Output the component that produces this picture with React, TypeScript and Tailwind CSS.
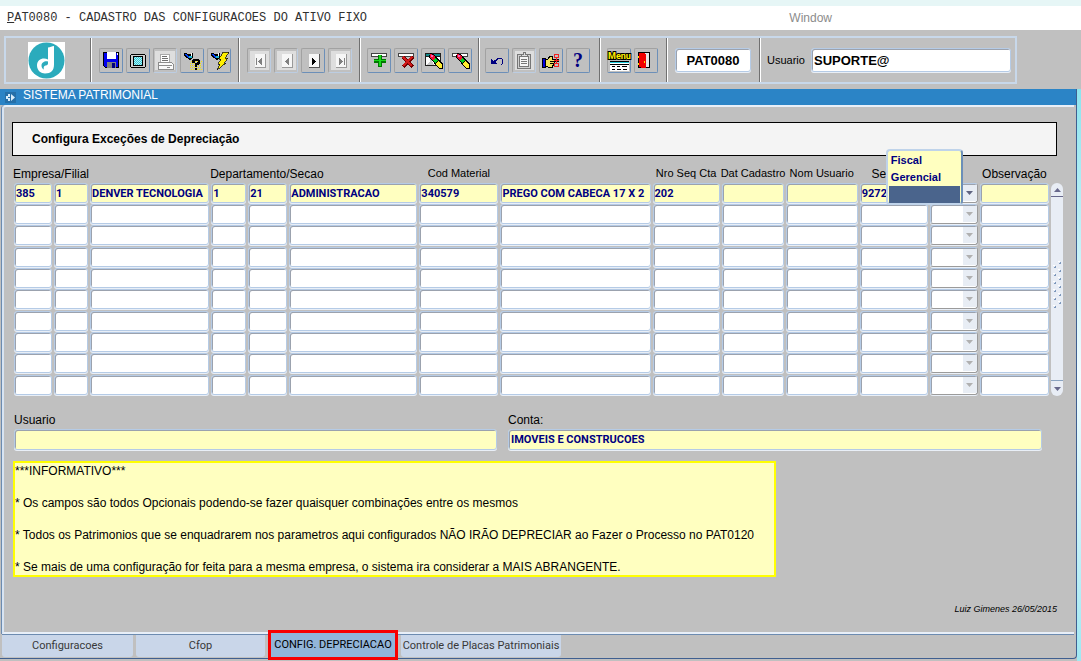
import { useState, type ReactNode } from 'react';

const fieldBase =
  'block w-full rounded-[3px] border border-[#b5cbe6] shadow-[inset_1px_1px_0_#9ba2ae,0_1px_0_#e9eff7] outline-none';

function Save() {
  return (
    <>
      <path d="M3 3h16v16H5l-2-2z" fill="#000" />
      <path d="M4 4h14v14H5l-1-1z" fill="#0000f0" />
      <path d="M7 3h9v7H7z" fill="#fff" />
      <path d="M17 4h1v2h-1z" fill="#fff" />
      <path d="M7 13h9v6H7z" fill="#808080" />
      <path d="M12 14h3v5h-3z" fill="#000080" />
    </>
  );
}

function Screen() {
  return (
    <>
      <path d="M4 5h14v1h1v12h-1v1H4v-1H3V6h1z" fill="#000" />
      <path d="M4 6h14v12H4z" fill="#d0d0d0" />
      <path d="M6 7h10v10H6z" fill="#000" />
      <path d="M7 8h8v8H7z" fill="#b4f0f4" />
      <path d="M7 8.500h8M7 10.500h8M7 12.500h8M7 14.500h8" stroke="#30c8d8" strokeDasharray="1 1" />
      <path d="M8 9.500h7M8 11.500h7M8 13.500h7M8 15.500h7" stroke="#30c8d8" strokeDasharray="1 1" />
    </>
  );
}

function Printer() {
  return (
    <>
      <path d="M1 2h20v19H1z" fill="#dedede" />
      <path d="M6 5h9l1 8H6z" fill="#fff" stroke="#aaa" />
      <path d="M8 7.500h5M8 9.500h6M8 11.500h6" stroke="#707070" />
      <path d="M4 13h13l2 2v5H4z" fill="#fafafa" stroke="#8c8c8c" />
      <path d="M4 16.500h14M13 18.500h3" stroke="#8c8c8c" />
    </>
  );
}

function Torch() {
  return (
    <>
      <path d="M3 4h2l1 1h4l2-2v5l-2 3H8L7 9H5L3 6z" fill="#000" />
      <path d="M4 5h1l2 2h2v2H7L4 6z" fill="#0040ff" />
      <path d="M8 7h3v2H8z" fill="#20b8d0" />
      <path d="M10 4h1v3h-1z" fill="#fff" />
    </>
  );
}

function TorchHelp() {
  return (
    <>
      <Torch />
      <path d="M10 12.500h11M9 14.500h12M9 16.500h12M9 18.500h12M10 20.500h11" stroke="#f8e800" strokeDasharray="1 1" />
      <path d="M12 10h6v1h1v4h-1v1h-2v2h-2v-4h2v-1h1v-1h-3v2h-3v-3h1zM14 19h2v2h-2z" fill="#000" />
    </>
  );
}

function TorchBolt() {
  return (
    <>
      <Torch />
      <path d="M15 3h6l-4 6h3l-4 5h2L9 21l3-6h-2l3-5h-2z" fill="#ffef00" stroke="#000" strokeWidth="0.7" />
      <path d="m17 4 2 0-4 6" stroke="#ffef00" fill="none" />
    </>
  );
}

function Nav({ dir, end, off }: { dir: 'l' | 'r'; end?: boolean; off?: boolean }) {
  const c = off ? '#808080' : '#000';
  return (
    <>
      {off && <path d="M2 2h19v19H2z" fill="#dedede" />}
      <path d="M7 5h11v14H7z" fill={off ? '#999' : '#555'} />
      <path d="M7 5h10v13H7z" fill="#f6f6f6" />
      {dir === 'l' ? <path d="M14 9v7l-4-3v-1z" fill={c} /> : <path d="M10 9v7l4-3v-1z" fill={c} />}
      {end && <path d={dir === 'l' ? 'M8 9h1v7H8z' : 'M15 9h1v7h-1z'} fill={c} />}
    </>
  );
}

function Bar() {
  return <path d="M3.500 4.500h15v3h-15z" fill="#fff" stroke="#444" />;
}

function Plus() {
  return (
    <>
      <Bar />
      <path d="M10 6h4v4h4v4h-4v4h-4v-4H6v-4h4z" fill="#007800" />
      <path d="M11 6h2v5h5v1h-5v5h-2v-5H6v-1h5z" fill="#18d818" />
    </>
  );
}

function Cross() {
  return (
    <>
      <Bar />
      <path d="m8 8 10 10M18 8 8 18" stroke="#700000" strokeWidth="4" />
      <path d="m8 8 9 9M17 8 8 17" stroke="#d01818" strokeWidth="2" />
    </>
  );
}

function Pencil() {
  return (
    <>
      <path d="m8 4 4 1 9 10v5h-4L7 8z" fill="#000" />
      <path d="m8 5 4 1 2 4-3 2-3-4z" fill="#f01030" />
      <path d="M9 6h2v2H9z" fill="#ff60c0" />
      <path d="m13 9 3 2-3 3-2-3z" fill="#00d020" />
      <path d="m16 12 4 4v3h-3l-4-4z" fill="#ffef30" />
    </>
  );
}

function ClearForm() {
  return (
    <>
      <path d="M3 4h16v13H3z" fill="#202020" />
      <path d="M4 5h14v2H4z" fill="#108888" />
      <path d="M4 8h14v8H4z" fill="#fff" />
      <path d="m8 8 4 8H4l4-4z" fill="#c8c8c8" />
      <Pencil />
    </>
  );
}

function ClearRow() {
  return (
    <>
      <Bar />
      <Pencil />
    </>
  );
}

function Undo() {
  return (
    <>
      <path d="M5 9v6h6l-2-2 3-2-1-1-4 2z" fill="#000080" />
      <path d="M10 11c2-2 6-3 7 1 0 2-1 3-2 4" fill="none" stroke="#000080" strokeWidth="1" />
    </>
  );
}

function Clipboard() {
  return (
    <>
      <path d="M2 2h19v19H2z" fill="#dedede" />
      <path d="M4.500 5.500h13v14h-13z" fill="#d0d0d0" stroke="#777" />
      <path d="M6.500 7.500h9v10h-9z" fill="#f5f5f5" stroke="#777" />
      <path d="M8.500 7.500v-2h2v-2h2v2h2v2z" fill="#ddd" stroke="#777" />
      <path d="M8 10.500h6M8 12.500h6M8 14.500h6" stroke="#777" />
    </>
  );
}

function Hand() {
  return (
    <>
      <path d="M2 9h3v9H2z" fill="#0000e0" stroke="#000" />
      <path d="M5 10h3l2-3h2v3h6v2h-4v2h-1v2h-1v2H8l-3-1z" fill="#f0e060" stroke="#000" />
      <path d="M10 12.500h4M10 14.500h3" stroke="#000" />
      <circle cx="16.500" cy="7" r="2" fill="none" stroke="#f02020" />
      <circle cx="16.500" cy="16" r="2" fill="none" stroke="#f02020" />
      <path d="m16 9 1 2-1 3M14 11h5" fill="none" stroke="#f02020" />
    </>
  );
}

function Help() {
  return (
    <text x="11" y="18" textAnchor="middle" fill="#000080" className="font-['Liberation_Serif',serif] text-[20px] font-bold">
      ?
    </text>
  );
}

function Menu() {
  return (
    <>
      <path d="M2 12h19v10H2z" fill="#fff" />
      <path d="M2 13h19v1H2z" fill="#20c8d8" />
      <path d="M2 12.500h19M2 15.500h19" stroke="#000" />
      <path d="M4 17.500h3M9 17.500h3M14 17.500h5M4 20.500h3M9 20.500h4M15 20.500h4" stroke="#000" />
      <text
        x="11.500"
        y="10"
        textAnchor="middle"
        fill="#ffef00"
        stroke="#000"
        strokeWidth="2"
        paintOrder="stroke"
        className="font-['Roboto',sans-serif] text-[9px] font-bold"
      >
        Menu
      </text>
    </>
  );
}

function Door() {
  return (
    <>
      <path d="M3.500 3.500h11v15h-11z" fill="#e8e8e8" stroke="#000" />
      <path d="M4 4h5l2 2v13H8l-4-1z" fill="#f00000" />
      <path d="M9 12h1v2H9zM3 7h1v2H3zM3 14h1v2H3z" fill="#ffe000" />
    </>
  );
}

function Tool({ label, off, children }: { label: string; off?: boolean; children: ReactNode }) {
  return (
    <button
      type="button"
      aria-label={label}
      disabled={off}
      className={`h-[25px] w-6 shrink-0 rounded-[2px] border border-t-[#a2a2a2] border-l-[#a2a2a2] ${
        off ? 'border-r-[#bccde2] border-b-[#bccde2]' : 'border-r-[#6c8fb8] border-b-[#6c8fb8]'
      }`}
    >
      <svg viewBox="0 0 22 23" className="block h-[23px] w-[22px] overflow-visible" shapeRendering="crispEdges">
        {children}
      </svg>
    </button>
  );
}

function Group({ children, className }: { children: ReactNode; className: string }) {
  return (
    <div className={`flex shrink-0 items-center gap-[3px] border-r border-r-[#707070] border-l border-l-white ${className}`}>
      {children}
    </div>
  );
}

function Logo() {
  return (
    <svg viewBox="0 0 37 37" className="size-[37px] bg-white" role="img" aria-label="Logo">
      <circle cx="18.500" cy="18.500" r="18" fill="#2babbc" />
      <path
        d="M20 17.500c-5-2.500-11 0-11 6 0 5 4 8 8 8 6 0 9-3 9-9V4c-2 0-4 1.500-6 1.500z"
        fill="#fff"
      />
      <path d="M20 19.500c-3-1-6.500 1-6.500 4 0 2 1 3.500 2.500 4-.5-1-.5-2.500.5-3.500 1-.8 3.500-.5 3.500-2.500z" fill="#2babbc" />
    </svg>
  );
}

const columns = [
  { w: 'w-[40px]', name: 'Empresa', value: '385' },
  { w: 'w-[36px]', name: 'Filial', value: '1' },
  { w: 'w-[121px]', name: 'Nome da empresa', value: 'DENVER TECNOLOGIA' },
  { w: 'w-[37px]', name: 'Departamento', value: '1' },
  { w: 'w-[41px]', name: 'Secao', value: '21' },
  { w: 'w-[130px]', name: 'Nome da secao', value: 'ADMINISTRACAO' },
  { w: 'w-[81px]', name: 'Cod Material', value: '340579' },
  { w: 'w-[152px]', name: 'Material', value: 'PREGO COM CABECA 17 X 2' },
  { w: 'w-[69px]', name: 'Nro Seq Cta', value: '202' },
  { w: 'w-[64px]', name: 'Dat Cadastro', value: '' },
  { w: 'w-[74px]', name: 'Nom Usuario', value: '' },
  { w: 'w-[70px]', name: 'Sequencia', value: '9272' },
  { w: 'w-[50px]', name: 'Tipo', value: '' },
  { w: 'w-[71px]', name: 'Observação', value: '' },
];

const rows = Array.from({ length: 10 }, (_, i) => i);

function TypeCell({ active }: { active: boolean }) {
  return (
    <div className="relative">
      <select
        aria-label="Tipo"
        disabled={!active}
        className={`h-5 appearance-none ${fieldBase} border-r-[#9b9b9b] border-b-[#9b9b9b] bg-white`}
      >
        <option value=""></option>
        <option>Fiscal</option>
        <option>Gerencial</option>
      </select>
      <span className="pointer-events-none absolute inset-y-0.5 right-px flex w-3.5 items-center justify-center bg-[#e8edf4]">
        <svg viewBox="0 0 7 4" className="h-1 w-[7px]">
          <path d="M0 0h7L3.500 4z" fill={active ? '#5f6480' : '#b0b0b0'} />
        </svg>
      </span>
      {active && (
        <ul
          role="listbox"
          aria-label="Tipo"
          className="absolute right-[15px] -bottom-0.5 z-10 w-[77px] rounded-[4px] border-2 border-t-[#bfd3ea] border-r-[#6c8fb8] border-b-[#bfd3ea] border-l-[#bfd3ea] bg-[#ffffc0] pt-px text-[11px] leading-[17px] font-bold text-[#000080]"
        >
          <li role="option" aria-selected="false" className="px-[3px]">Fiscal</li>
          <li role="option" aria-selected="false" className="px-[3px]">Gerencial</li>
          <li role="option" aria-selected="true" aria-label="Vazio" className="mx-px h-[17px] bg-[#4a648c]"></li>
        </ul>
      )}
    </div>
  );
}

function Grid() {
  return (
    <table className="w-full table-fixed border-collapse">
      <colgroup>
        {columns.map((c) => (
          <col key={c.name} className={c.w} />
        ))}
      </colgroup>
      <thead>
        <tr className="h-[19px] text-[11px] whitespace-nowrap [&>th]:p-0 [&>th]:font-normal">
          <th colSpan={3} className="text-left text-[12px]">Empresa/Filial</th>
          <th colSpan={3} className="text-left text-[12px]">Departamento/Secao</th>
          <th>Cod Material</th>
          <th></th>
          <th>Nro Seq Cta</th>
          <th>Dat Cadastro</th>
          <th>Nom Usuario</th>
          <th className="text-[12px]"><span className="pr-[30px]">Se</span></th>
          <th></th>
          <th className="text-[12px]">Observação</th>
        </tr>
      </thead>
      <tbody>
        {rows.map((r) => (
          <tr key={r} className="h-[21px] nth-[3n]:h-[22px]">
            {columns.map((c) => (
              <td key={c.name} className="px-px py-0 align-top">
                {c.name === 'Tipo' ? (
                  <TypeCell active={r === 0} />
                ) : (
                  <input
                    aria-label={`${c.name} ${r + 1}`}
                    defaultValue={r === 0 ? c.value : ''}
                    className={`h-5 px-px font-['Roboto',sans-serif] text-[11px] font-bold text-[#000080] ${fieldBase} ${r === 0 ? 'bg-[#ffffc0]' : 'bg-white'}`}
                  />
                )}
              </td>
            ))}
          </tr>
        ))}
      </tbody>
    </table>
  );
}

function ScrollBar() {
  return (
    <div className="mt-[19px] flex w-3 shrink-0 flex-col items-center justify-between rounded-[6px] bg-[#e8edf5]">
      <button type="button" aria-label="Subir" className="flex h-3.5 w-full items-center justify-center border-b border-[#67688c]">
        <svg viewBox="0 0 7 4" className="h-1 w-[7px]"><path d="M0 4h7L3.500 0z" fill="#67688c" /></svg>
      </button>
      <svg viewBox="0 0 10 52" className="mb-1 h-[52px] w-2.5" shapeRendering="crispEdges">
        {[0, 1, 2, 3, 4, 5].map((i) => (
          <g key={i}>
            <path d={`M2 ${i * 8 + 6}h1v-1h1M7 ${i * 8 + 2}h1v-1h1`} stroke="#7d98bc" fill="none" />
            <path d={`M1 ${i * 8 + 4}h2M6 ${i * 8}h2`} stroke="#fff" />
          </g>
        ))}
      </svg>
      <button type="button" aria-label="Descer" className="flex h-4 w-full items-center justify-center border-t border-[#8aa3c0]">
        <svg viewBox="0 0 7 4" className="h-1 w-[7px]"><path d="M0 0h7L3.500 4z" fill="#67688c" /></svg>
      </button>
    </div>
  );
}

const tabs = [
  { label: 'Configuracoes', w: 'w-[131px]' },
  { label: 'Cfop', w: 'w-[129px]' },
  { label: 'CONFIG. DEPRECIACAO', w: 'w-[130px]' },
  { label: 'Controle de Placas Patrimoniais', w: 'w-[160px]' },
];

export default function App() {
  const [tab, setTab] = useState(2);
  return (
    <div className="flex min-h-screen flex-col bg-[#c0c0c0] font-['Liberation_Sans',Arial,sans-serif] text-[12px] text-black">
      <div className="h-1.5 bg-[#e6f6f6]" />
      <header className="flex h-6 items-center justify-between bg-white pr-[249px] pl-[7px]">
        <h1 className="font-['Liberation_Mono',monospace] text-[12px] text-[#303030]">
          <span className="underline">P</span>AT0080 - CADASTRO DAS CONFIGURACOES DO ATIVO FIXO
        </h1>
        <span className="text-[#8c8c8c]">Window</span>
      </header>

      <div className="pt-1.5 pr-16 pb-[5px] pl-1">
        <div className="flex h-12 border-2 border-[#c8d8ea]">
          <div className="flex w-[85px] shrink-0 items-center justify-center border-r border-[#707070] pr-1">
            <Logo />
          </div>
          <Group className="w-[148px] pl-[7px]">
            <Tool label="Salvar"><Save /></Tool>
            <Tool label="Tela"><Screen /></Tool>
            <Tool label="Imprimir" off><Printer /></Tool>
            <Tool label="Entrar consulta"><TorchHelp /></Tool>
            <Tool label="Executar consulta"><TorchBolt /></Tool>
          </Group>
          <Group className="w-[121px] pl-[7px]">
            <Tool label="Primeiro" off><Nav dir="l" end off /></Tool>
            <Tool label="Anterior" off><Nav dir="l" off /></Tool>
            <Tool label="Proximo"><Nav dir="r" /></Tool>
            <Tool label="Ultimo" off><Nav dir="r" end off /></Tool>
          </Group>
          <Group className="w-[119px] pl-1.5">
            <Tool label="Inserir"><Plus /></Tool>
            <Tool label="Excluir"><Cross /></Tool>
            <Tool label="Limpar tela"><ClearForm /></Tool>
            <Tool label="Limpar registro"><ClearRow /></Tool>
          </Group>
          <Group className="w-[121px] pl-[5px]">
            <Tool label="Desfazer"><Undo /></Tool>
            <Tool label="Colar" off><Clipboard /></Tool>
            <Tool label="Lista"><Hand /></Tool>
            <Tool label="Ajuda"><Help /></Tool>
          </Group>
          <Group className="w-[67px] pl-1.5">
            <Tool label="Menu"><Menu /></Tool>
            <Tool label="Sair"><Door /></Tool>
          </Group>
          <Group className="w-[93px] pl-[7px]">
            <input
              aria-label="Programa"
              defaultValue="PAT0080"
              className={`h-6 max-w-[76px] bg-white text-center text-[13px] font-bold ${fieldBase}`}
            />
          </Group>
          <div className="flex flex-1 items-center border-l border-white pr-1 pl-1.5">
            <label htmlFor="user" className="w-11 shrink-0 text-[11px]">Usuario</label>
            <input id="user" defaultValue="SUPORTE@" className={`h-6 bg-white px-0.5 text-[13px] font-bold ${fieldBase}`} />
          </div>
        </div>
      </div>

      <div className="flex flex-1">
        <main className="mb-0.5 flex min-w-0 flex-1 flex-col rounded-br-[4px] border-r border-b border-[#3f5f90]">
          <div className="flex h-4 items-center gap-[7px] bg-[#2b84c6] pl-[5px] text-white">
            <svg viewBox="0 0 11 11" className="size-[11px]" aria-hidden="true">
              <path d="M0 0h11v11H0z" fill="#256fa8" />
              <path d="M5 2v7H3V7H1V4h2V2zM6 2l4 3.500L6 9z" fill="#d8ecfa" />
              <path d="M3 5h2v1H3z" fill="#256fa8" />
            </svg>
            <h2 className="pb-1 leading-3">SISTEMA PATRIMONIAL</h2>
          </div>

          <section className="mr-0.5 ml-0.5 flex flex-1 flex-col rounded-tl-[4px] border-t-2 border-b-2 border-l-2 border-t-[#e8eff8] border-b-[#e8eff8] border-l-[#d8e4f2] pr-2 pl-2 shadow-[0_1px_0_#6c8bb0,-1px_0_0_#6c8bb0]">
            <h3 className="mt-[15px] mr-[9px] flex h-[34px] items-center border border-black bg-[#f4f4f4] pl-[19px] font-bold">
              Configura Exceções de Depreciação
            </h3>
            <div className="mt-2 mr-[3px] flex gap-px pl-px">
              <Grid />
              <ScrollBar />
            </div>

            <div className="mt-4 mr-6 flex gap-[11px] pl-0.5">
              <div className="w-[483px] shrink">
                <label htmlFor="usuario" className="block h-[17px] leading-4">Usuario</label>
                <input id="usuario" className={`h-[21px] bg-[#ffffc0] px-0.5 font-['Roboto',sans-serif] text-[11px] font-bold text-[#000080] ${fieldBase}`} />
              </div>
              <div className="flex-1">
                <label htmlFor="conta" className="block h-[17px] leading-4">Conta:</label>
                <input
                  id="conta"
                  defaultValue="IMOVEIS E CONSTRUCOES"
                  className={`h-[21px] bg-[#ffffc0] px-0.5 font-['Roboto',sans-serif] text-[11px] font-bold text-[#000080] ${fieldBase}`}
                />
              </div>
            </div>

            <div className="mt-[11px] ml-px w-[763px] border-2 border-[#ffff00] bg-[#ffffc0] leading-4 whitespace-nowrap">
              <p>***INFORMATIVO***</p>
              <p className="mt-4">* Os campos são todos Opcionais podendo-se fazer quaisquer combinações entre os mesmos</p>
              <p className="mt-4">* Todos os Patrimonios que se enquadrarem nos parametros aqui configurados NÃO IRÃO DEPRECIAR ao Fazer o Processo no PAT0120</p>
              <p className="mt-4">* Se mais de uma configuração for feita para a mesma empresa, o sistema ira considerar a MAIS ABRANGENTE.</p>
            </div>

            <p className="mt-6 mr-[9px] text-right text-[9px] leading-4 italic">Luiz Gimenes 26/05/2015</p>
          </section>

          <div role="tablist" className="flex h-6 shrink-0 items-start gap-[3px] pl-0.5 font-['Roboto',sans-serif] text-[11px]">
            {tabs.map((t, i) => (
              <button
                key={t.label}
                type="button"
                role="tab"
                aria-selected={tab === i}
                onClick={() => setTab(i)}
                className={`whitespace-nowrap ${t.w} ${
                  tab === i
                    ? 'z-10 -mt-1 h-[30px] border-[3px] border-[#f80000] bg-[#92b5d8] text-black'
                    : 'mt-px h-[22px] rounded-b-[3px] bg-[#c9d6e9] text-[#383838]'
                }`}
              >
                {t.label}
              </button>
            ))}
          </div>
        </main>
        <div className="w-1 bg-linear-to-b from-[#8be4ee] via-[#f0fcff] to-[#a0e8f2]" />
      </div>
    </div>
  );
}
